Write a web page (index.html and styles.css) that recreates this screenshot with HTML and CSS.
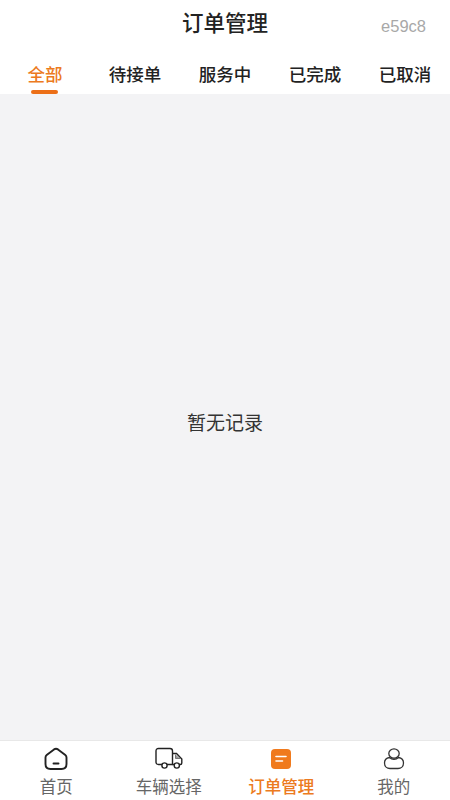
FILE: index.html
```html
<!DOCTYPE html>
<html>
    <head>
        <meta charset="utf-8">
        <title>订单管理</title>
        <meta name="viewport" content="width=device-width, initial-scale=1">
        <link rel="stylesheet" href="styles.css">
    </head>
    <body>
        <main class="page">
            <header class="top-bar">
                <h1 class="title">订单管理</h1>
                <span class="version">e59c8</span>
            </header>
            <ul class="tabs">
                <li class="tab active">全部</li>
                <li class="tab">待接单</li>
                <li class="tab">服务中</li>
                <li class="tab">已完成</li>
                <li class="tab">已取消</li>
            </ul>
            <div class="content">
                <p class="empty">暂无记录</p>
            </div>
            <nav class="nav">
                <div class="nav-item">
                    <svg class="nav-icon" viewBox="0 0 26 24" fill="none" stroke="#222" stroke-width="1.9">
                        <path d="M2.5 10.5 Q2.5 9 3.7 8 L11 2.4 Q13 1 15 2.4 L22.3 8 Q23.5 9 23.5 10.5 V17 Q23.5 22 18.5 22 H7.5 Q2.5 22 2.5 17 Z"/>
                        <path d="M10.5 16.5 H15.5" stroke-linecap="round"/>
                    </svg>
                    <span>首页</span>
                </div>
                <div class="nav-item">
                    <svg class="nav-icon" viewBox="0 0 28 24" fill="none" stroke="#222" stroke-width="1.4">
                        <path d="M7 17.5 H3.5 Q1 17.5 1 15 V4 Q1 1.5 3.5 1.5 H15 Q17.5 1.5 17.5 4 V17.5 H12"/>
                        <path d="M17.5 6.5 H21.5 L26.8 12 V16 Q26.8 17.5 25.3 17.5 H24.5 M17.5 17.5 H19"/>
                        <path d="M20.5 7.5 V11.5 H25" fill="#999" stroke="#777" stroke-width="1"/>
                        <circle cx="9.5" cy="18.5" r="2.6"/>
                        <circle cx="21.8" cy="18.5" r="2.6"/>
                    </svg>
                    <span>车辆选择</span>
                </div>
                <div class="nav-item active">
                    <svg class="nav-icon" viewBox="0 0 26 24">
                        <rect x="3" y="2" width="20" height="20" rx="4" fill="#f07a1d"/>
                        <path d="M8 9.5 H18 M8 14 H14.5" stroke="#fff" stroke-width="1.6" stroke-linecap="round"/>
                    </svg>
                    <span>订单管理</span>
                </div>
                <div class="nav-item">
                    <svg class="nav-icon" viewBox="0 0 26 24" fill="none" stroke="#333" stroke-width="1.3">
                        <ellipse cx="13" cy="6.5" rx="5.2" ry="4.6"/>
                        <path d="M8.5 10.5 C5 11 3.5 13.5 3.5 16 C3.5 19.5 6 21.5 9 21.5 H17 C20 21.5 22.5 19.5 22.5 16 C22.5 13.5 21 11 17.5 10.5 C15 12.8 11 12.8 8.5 10.5 Z"/>
                    </svg>
                    <span>我的</span>
                </div>
            </nav>
        </main>
    </body>
</html>
```

FILE: styles.css
```css
*{
    margin: 0;
    padding: 0;
    box-sizing: border-box;
}
body{
    font-family: "Noto Sans CJK SC", "Liberation Sans", sans-serif;
    background-color: #fff;
}
.page{
    display: flex;
    flex-direction: column;
    height: 800px;
}
.top-bar{
    position: relative;
    height: 46px;
    display: flex;
    align-items: center;
    justify-content: center;
}
.title{
    font-size: 21.5px;
    font-weight: 500;
    line-height: 30px;
    margin-bottom: 3px;
    color: #222;
}
.version{
    position: absolute;
    right: 24px;
    top: 16px;
    font-family: "Liberation Sans", sans-serif;
    font-size: 16.5px;
    line-height: 20px;
    color: #a8a8a8;
}
.tabs{
    list-style: none;
    display: grid;
    grid-template-columns: repeat(5, 1fr);
    height: 48px;
    padding-top: 16px;
}
.tab{
    position: relative;
    text-align: center;
    font-size: 17.5px;
    font-weight: 500;
    line-height: 24px;
    color: #222;
}
.tab.active{
    color: #ec7a20;
}
.tab.active::after{
    content: "";
    position: absolute;
    left: 31px;
    bottom: 0;
    width: 27px;
    height: 4px;
    border-radius: 2px;
    background-color: #ec6f17;
}
.content{
    flex: 1;
    display: flex;
    align-items: center;
    justify-content: center;
    padding-top: 8px;
    background-color: #f3f3f5;
}
.empty{
    font-size: 19px;
    color: #333;
}
.nav{
    display: grid;
    grid-template-columns: repeat(4, 1fr);
    height: 60px;
    border-top: 1px solid #e8e8e8;
}
.nav-item{
    display: flex;
    flex-direction: column;
    align-items: center;
    padding-top: 6px;
    font-size: 16.5px;
    line-height: 22px;
    color: #666;
}
.nav-item.active{
    color: #ec7a20;
    font-weight: 500;
}
.nav-icon{
    width: 28px;
    height: 24px;
    margin-bottom: 4px;
}
```
